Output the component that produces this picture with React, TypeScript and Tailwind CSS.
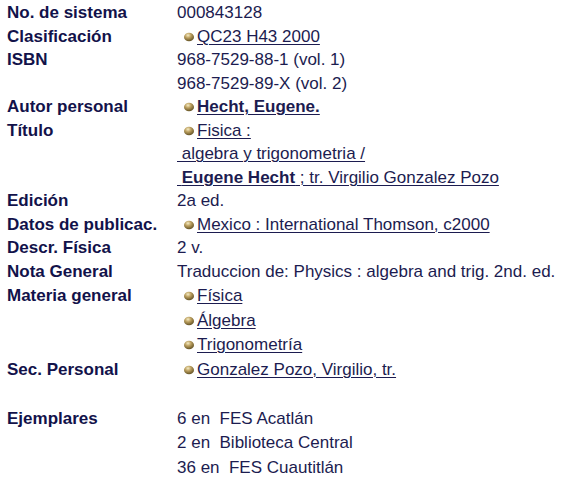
import React from "react";

const Bullet = () => (
  <svg width="20" height="10" viewBox="0 0 20 10" className="inline-block align-[0px]">
    <defs>
      <radialGradient id="ball" cx="0.4" cy="0.3" r="0.75">
        <stop offset="0" stopColor="#f6ecc4" />
        <stop offset="0.4" stopColor="#bca060" />
        <stop offset="1" stopColor="#5a4a1e" />
      </radialGradient>
    </defs>
    <ellipse cx="12" cy="5" rx="5" ry="4.3" fill="url(#ball)" />
  </svg>
);

const Link = ({ children }: { children: React.ReactNode }) => (
  <span>
    <Bullet />
    <a href="#" className="underline underline-offset-2 decoration-1">{children}</a>
  </span>
);

const Row = ({ label, tall, children }: { label?: string; tall?: boolean; children: React.ReactNode }) => (
  <tr className={tall ? "h-[24.5px]" : "h-[23.5px]"}>
    <td className="w-[177px] pl-[7px] align-top font-bold text-[#12124a]">{label}</td>
    <td className="align-top whitespace-nowrap">{children}</td>
  </tr>
);

const App = () => {
  return (
    <div className="min-h-screen bg-white pt-[1px] text-[17px] leading-[23.5px] text-[#1c1c50] font-['Liberation_Sans',Arial,sans-serif]">
      <table className="border-collapse">
        <tbody>
          <Row label="No. de sistema">000843128</Row>
          <Row label="Clasificación"><Link>QC23 H43 2000</Link></Row>
          <Row label="ISBN">968-7529-88-1 (vol. 1)</Row>
          <Row>968-7529-89-X (vol. 2)</Row>
          <Row label="Autor personal"><Link><b>Hecht, Eugene.</b></Link></Row>
          <Row label="Título">
            <Bullet />
            <a href="#" className="underline underline-offset-2 decoration-1">
              Fisica :<br />&nbsp;algebra y trigonometria /<br />&nbsp;<b>Eugene Hecht</b> ; tr. Virgilio Gonzalez Pozo
            </a>
          </Row>
          <Row label="Edición">2a ed.</Row>
          <Row label="Datos de publicac."><Link>Mexico : International Thomson, c2000</Link></Row>
          <Row label="Descr. Física">2 v.</Row>
          <Row label="Nota General" tall>Traduccion de: Physics : algebra and trig. 2nd. ed.</Row>
          <Row label="Materia general" tall><Link>Física</Link></Row>
          <Row tall><Link>Álgebra</Link></Row>
          <Row tall><Link>Trigonometría</Link></Row>
          <Row label="Sec. Personal" tall><Link>Gonzalez Pozo, Virgilio, tr.</Link></Row>
          <Row tall>&nbsp;</Row>
          <Row label="Ejemplares" tall>6 en&nbsp; FES Acatlán</Row>
          <Row tall>2 en&nbsp; Biblioteca Central</Row>
          <Row tall>36 en&nbsp; FES Cuautitlán</Row>
        </tbody>
      </table>
    </div>
  );
};

export default App;
